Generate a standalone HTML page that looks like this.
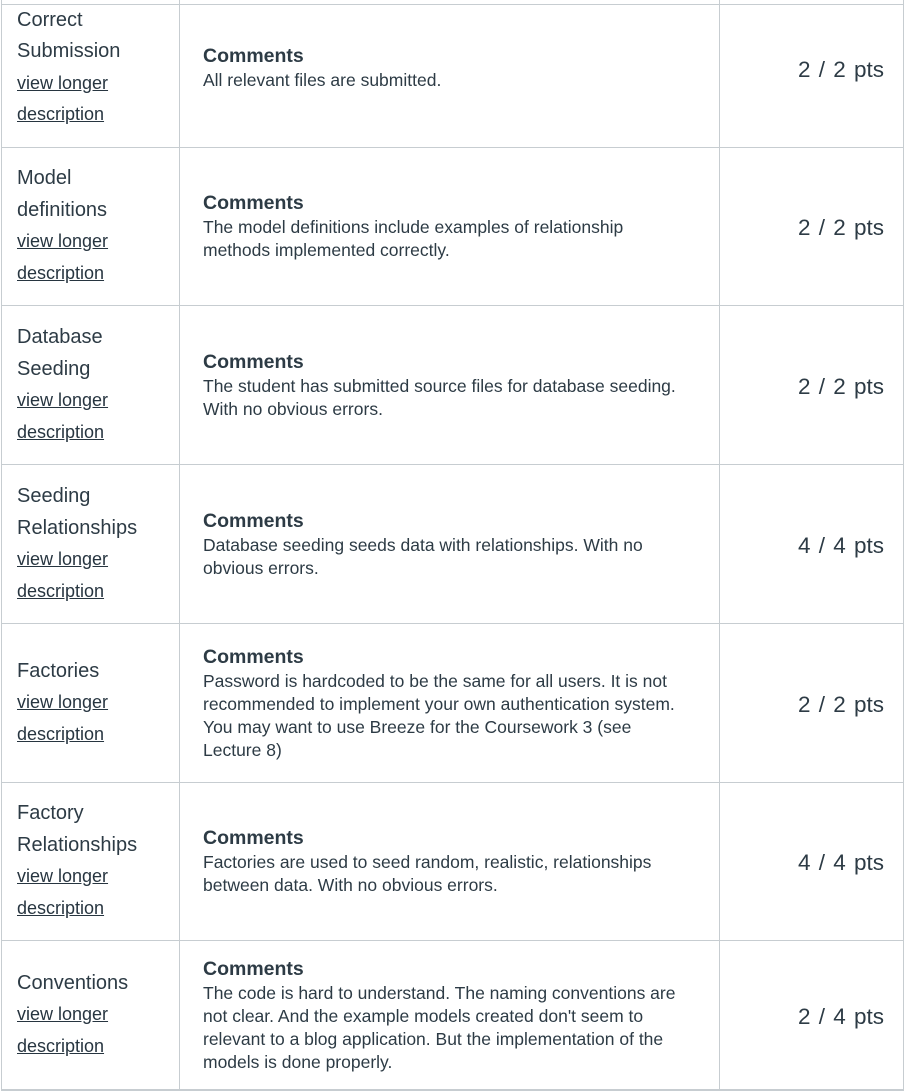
<!DOCTYPE html>
<html><head><meta charset="utf-8"><style>
html,body{margin:0;padding:0;background:#fff;}
body{width:906px;height:1092px;position:relative;overflow:hidden;font-family:"Liberation Sans",sans-serif;color:#2d3b45;}
.row{position:absolute;left:1px;width:903px;display:flex;border-bottom:1px solid #c7cdd1;box-sizing:border-box;}
.c1{width:179px;border-left:1px solid #c7cdd1;border-right:1px solid #c7cdd1;display:flex;align-items:center;padding-left:15px;box-sizing:border-box;}
.c2{width:540px;border-right:1px solid #c7cdd1;display:flex;align-items:center;padding-left:23px;padding-right:8px;box-sizing:border-box;}
.c3{flex:1;border-right:1px solid #c7cdd1;display:flex;align-items:center;justify-content:flex-end;padding-right:19px;font-size:22.5px;word-spacing:2px;padding-top:4px;}
.crit{font-size:20px;line-height:31.5px;}
.crit a{color:#273540;text-decoration:underline;display:block;font-size:18px;}
.h{font-weight:bold;font-size:19.5px;line-height:25px;}
.t{font-size:17.5px;line-height:23px;}
.top{position:absolute;left:1px;top:4px;width:903px;height:1px;background:#c7cdd1;}
</style></head><body>
<div class="row" style="top:-12px;height:160px;"><div class="c1"><div class="crit">Correct<br>Submission<a>view longer</a><a>description</a></div></div><div class="c2"><div><div class="h">Comments</div><div class="t">All relevant files are submitted.</div></div></div><div class="c3">2 / 2 pts</div></div>
<div class="top"></div>
<div class="row" style="top:147px;height:159px;"><div class="c1"><div class="crit">Model<br>definitions<a>view longer</a><a>description</a></div></div><div class="c2"><div><div class="h">Comments</div><div class="t">The model definitions include examples of relationship<br>methods implemented correctly.</div></div></div><div class="c3">2 / 2 pts</div></div>
<div class="row" style="top:306px;height:159px;"><div class="c1"><div class="crit">Database<br>Seeding<a>view longer</a><a>description</a></div></div><div class="c2"><div><div class="h">Comments</div><div class="t">The student has submitted source files for database seeding.<br>With no obvious errors.</div></div></div><div class="c3">2 / 2 pts</div></div>
<div class="row" style="top:465px;height:159px;"><div class="c1"><div class="crit">Seeding<br>Relationships<a>view longer</a><a>description</a></div></div><div class="c2"><div><div class="h">Comments</div><div class="t">Database seeding seeds data with relationships. With no<br>obvious errors.</div></div></div><div class="c3">4 / 4 pts</div></div>
<div class="row" style="top:624px;height:159px;"><div class="c1"><div class="crit">Factories<a>view longer</a><a>description</a></div></div><div class="c2"><div><div class="h">Comments</div><div class="t">Password is hardcoded to be the same for all users. It is not<br>recommended to implement your own authentication system.<br>You may want to use Breeze for the Coursework 3 (see<br>Lecture 8)</div></div></div><div class="c3">2 / 2 pts</div></div>
<div class="row" style="top:782px;height:159px;"><div class="c1"><div class="crit">Factory<br>Relationships<a>view longer</a><a>description</a></div></div><div class="c2"><div><div class="h">Comments</div><div class="t">Factories are used to seed random, realistic, relationships<br>between data. With no obvious errors.</div></div></div><div class="c3">4 / 4 pts</div></div>
<div class="row" style="top:941px;height:150px;border-bottom:2px solid #c7cdd1;"><div class="c1"><div class="crit">Conventions<a>view longer</a><a>description</a></div></div><div class="c2"><div><div class="h">Comments</div><div class="t">The code is hard to understand. The naming conventions are<br>not clear. And the example models created don't seem to<br>relevant to a blog application. But the implementation of the<br>models is done properly.</div></div></div><div class="c3">2 / 4 pts</div></div>
</body></html>
